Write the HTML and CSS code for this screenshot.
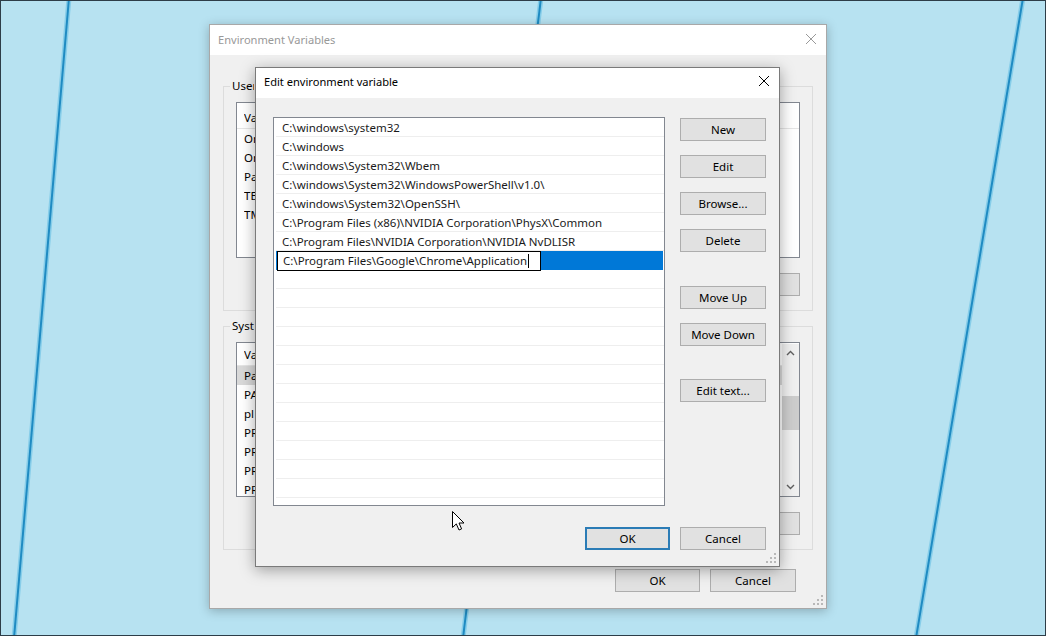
FILE: index.html
```html
<!DOCTYPE html>
<html>
<head>
<meta charset="utf-8">
<link rel="stylesheet" href="styles.css">
</head>
<body>
<div class="desk">
  <svg class="backdrop" width="1046" height="636" viewBox="0 0 1046 636">
    <g class="halo">
      <line x1="69" y1="-2" x2="14" y2="638"/>
      <line x1="541" y1="-2" x2="463" y2="638"/>
      <line x1="1023" y1="-2" x2="916" y2="638"/>
    </g>
    <g class="core">
      <line x1="69" y1="-2" x2="14" y2="638"/>
      <line x1="541" y1="-2" x2="463" y2="638"/>
      <line x1="1023" y1="-2" x2="916" y2="638"/>
    </g>
  </svg>

  <div class="win win-env">
    <div class="titlebar inactive">
      <span class="title">Environment Variables</span>
      <svg class="close" width="12" height="12" viewBox="0 0 12 12"><path d="M1 1L11 11M11 1L1 11"/></svg>
    </div>
    <div class="env-body">
      <fieldset class="group">
        <legend><span class="clip">User</span></legend>
        <div class="vlist vlist-user">
          <div class="vhead"><span class="c1">Va</span></div>
          <div class="vrow"><span class="c1">On</span></div>
          <div class="vrow"><span class="c1">On</span></div>
          <div class="vrow"><span class="c1">Pa</span></div>
          <div class="vrow"><span class="c1">TE</span></div>
          <div class="vrow"><span class="c1">TM</span></div>
        </div>
        <div class="grp-btns">
          <div class="btn"></div>
          <div class="btn"></div>
          <div class="btn"></div>
        </div>
      </fieldset>
      <fieldset class="group group-sys">
        <legend><span class="clip">Syste</span></legend>
        <div class="vlist vlist-sys">
          <div class="vcontent">
            <div class="vhead"><span class="c1">Va</span></div>
            <div class="vrow sel"><span class="c1">Pa</span></div>
            <div class="vrow"><span class="c1">PA</span></div>
            <div class="vrow"><span class="c1">pl</span></div>
            <div class="vrow"><span class="c1">PR</span></div>
            <div class="vrow"><span class="c1">PR</span></div>
            <div class="vrow"><span class="c1">PR</span></div>
            <div class="vrow"><span class="c1">PR</span></div>
          </div>
          <div class="vscroll">
            <svg class="arrow" width="9" height="6" viewBox="0 0 9 6"><path d="M1 5L4.5 1.5L8 5"/></svg>
            <div class="track"><div class="thumb"></div></div>
            <svg class="arrow" width="9" height="6" viewBox="0 0 9 6"><path d="M1 1L4.5 4.5L8 1"/></svg>
          </div>
        </div>
        <div class="grp-btns">
          <div class="btn"></div>
          <div class="btn"></div>
          <div class="btn"></div>
        </div>
      </fieldset>
      <div class="footer env-footer">
        <div class="btn ok">OK</div>
        <div class="btn">Cancel</div>
      </div>
    </div>
    <svg class="grip" width="10" height="10" viewBox="0 0 10 10"><path d="M8 0h2v2h-2zM8 4h2v2h-2zM4 4h2v2h-2zM8 8h2v2h-2zM4 8h2v2h-2zM0 8h2v2h-2z"/></svg>
  </div>

  <div class="win win-edit">
    <div class="titlebar">
      <span class="title">Edit environment variable</span>
      <svg class="close" width="12" height="12" viewBox="0 0 12 12"><path d="M1 1L11 11M11 1L1 11"/></svg>
    </div>
    <div class="edit-body">
      <div class="plist">
        <div class="prow">C:\windows\system32</div>
        <div class="prow">C:\windows</div>
        <div class="prow">C:\windows\System32\Wbem</div>
        <div class="prow">C:\windows\System32\WindowsPowerShell\v1.0\</div>
        <div class="prow">C:\windows\System32\OpenSSH\</div>
        <div class="prow">C:\Program Files (x86)\NVIDIA Corporation\PhysX\Common</div>
        <div class="prow">C:\Program Files\NVIDIA Corporation\NVIDIA NvDLISR</div>
        <div class="prow editing"><div class="editbox">C:\Program Files\Google\Chrome\Application<span class="caret"></span></div></div>
        <div class="prow"></div>
        <div class="prow"></div>
        <div class="prow"></div>
        <div class="prow"></div>
        <div class="prow"></div>
        <div class="prow"></div>
        <div class="prow"></div>
        <div class="prow"></div>
        <div class="prow"></div>
        <div class="prow"></div>
        <div class="prow"></div>
        <div class="prow"></div>
        <div class="prow"></div>
      </div>
      <div class="side-btns">
        <div class="btn">New</div>
        <div class="btn">Edit</div>
        <div class="btn">Browse...</div>
        <div class="btn">Delete</div>
        <div class="btn gap-big">Move Up</div>
        <div class="btn">Move Down</div>
        <div class="btn gap-big2">Edit text...</div>
      </div>
      <div class="footer edit-footer">
        <div class="btn default">OK</div>
        <div class="btn">Cancel</div>
      </div>
    </div>
    <svg class="grip" width="10" height="10" viewBox="0 0 10 10"><path d="M8 0h2v2h-2zM8 4h2v2h-2zM4 4h2v2h-2zM8 8h2v2h-2zM4 8h2v2h-2zM0 8h2v2h-2z"/></svg>
  </div>

  <svg class="cursor" width="13" height="20" viewBox="0 0 13 20"><path d="M0.5 0.5L0.5 16.5L4.3 12.9L7 19L9.6 17.9L7 12L12 12Z"/></svg>
</div>
</body>
</html>
```

FILE: styles.css
```css
* { box-sizing: border-box; }
html, body { margin: 0; padding: 0; }
body {
  width: 1046px;
  height: 636px;
  overflow: hidden;
  font-family: "Noto Sans", "Open Sans", sans-serif;
  font-size: 11.5px;
  color: #000;
}
.desk {
  position: relative;
  width: 1046px;
  height: 636px;
  background: #b7e2f1;
  border: 1px solid #2d3d48;
  overflow: hidden;
}
.backdrop { position: absolute; left: -1px; top: -1px; }
.backdrop .halo line { stroke: #86cde9; stroke-width: 5; }
.backdrop .core line { stroke: #1f8bc2; stroke-width: 2; }

.win {
  position: absolute;
  background: #f0f0f0;
  display: flex;
  flex-direction: column;
}
.win-env {
  left: 208px; top: 23px;
  width: 618px; height: 585px;
  border: 1px solid #a8a8a8;
  box-shadow: 0 2px 10px rgba(0,0,0,0.25);
}
.win-edit {
  left: 254px; top: 66px;
  width: 525px; height: 500px;
  border: 1px solid #7a7a7a;
  box-shadow: 0 3px 14px rgba(0,0,0,0.35);
}
.titlebar {
  height: 30px;
  flex: none;
  background: #fff;
  display: flex;
  align-items: center;
  justify-content: space-between;
  padding: 0 8px 2px 8px;
}
.titlebar .title { font-size: 11.1px; color: #000; }
.win-edit .titlebar { padding-bottom: 4px; }
.titlebar .close { stroke: #000; stroke-width: 1; fill: none; margin-right: 1px; }
.titlebar.inactive .title { color: #999; }
.titlebar.inactive .close { stroke: #999; }

.btn {
  width: 86px;
  height: 23px;
  background: #e1e1e1;
  border: 1px solid #adadad;
  display: flex;
  align-items: center;
  justify-content: center;
  color: #000;
}
.btn.default { border: 2px solid #2b7cb6; }

/* Environment variables window */
.env-body {
  flex: 1;
  display: flex;
  flex-direction: column;
  padding: 23px 13px 0 13px;
}
.group {
  margin: 0;
  padding: 8px 12px 14px 12px;
  border: 1px solid #dcdcdc;
  min-width: 0;
}
.group legend {
  padding: 0 2px;
  margin-left: -6px;
  line-height: 16px;
  color: #000;
}
.group legend .clip { display: inline-block; width: 22px; overflow: hidden; vertical-align: top; white-space: nowrap; }
.group-sys { margin-top: 7px; }
.vlist {
  background: #fff;
  border: 1px solid #828790;
  height: 156px;
  overflow: hidden;
}
.vlist-sys { display: flex; height: 155px; padding-top: 1px; }
.vcontent { flex: 1; }
.vhead, .vrow { display: flex; height: 19px; align-items: center; padding-left: 7px; white-space: nowrap; }
.vhead { height: 22px; border-bottom: 1px solid #e5e5e5; }
.vlist-user .vhead { margin-top: 3px; height: 23px; }
.vrow.sel { background: #d9d9d9; }
.vhead .c1, .vrow .c1 { width: 12px; overflow: hidden; }
.vscroll {
  width: 17px;
  background: #f0f0f0;
  display: flex;
  flex-direction: column;
  align-items: center;
}
.vscroll .arrow { fill: none; stroke: #606060; stroke-width: 1.4; margin: 6px 0; }
.vscroll .track { flex: 1; width: 100%; padding: 34px 0 0 0; }
.vscroll .thumb { width: 100%; height: 34px; background: #cdcdcd; }
.grp-btns {
  display: flex;
  justify-content: flex-end;
  gap: 10px;
  margin-top: 15px;
}
.grp-btns .btn { width: 75px; height: 23px; }
.env-footer {
  display: flex;
  justify-content: flex-end;
  gap: 10px;
  margin-top: 19px;
  padding-right: 17px;
}
.env-footer .btn { width: 86px; }
.env-footer .btn.ok { width: 85px; }

/* Edit dialog */
.edit-body {
  flex: 1;
  display: grid;
  grid-template-columns: 391px 86px;
  grid-template-rows: 389px auto;
  column-gap: 16px;
  padding: 19px 12px 0 18px;
}
.plist {
  background: #fff;
  border: 1px solid #828790;
  overflow: hidden;
  padding: 0 0 0 2px;
  margin-left: -1px;
}
.prow {
  height: 19px;
  border-bottom: 1px solid #eeeeee;
  padding-left: 6px;
  display: flex;
  align-items: center;
  white-space: nowrap;
  color: #1a1a1a;
}
.prow.editing {
  background: #0078d7;
  padding-left: 0;
  border-bottom: none;
  margin-right: 1px;
}
.editbox {
  width: 264px;
  height: 20px;
  margin-left: 1px;
  background: #fff;
  border: 1px solid #000;
  padding-left: 5px;
  display: flex;
  align-items: center;
}
.caret {
  display: inline-block;
  width: 1px;
  height: 14px;
  background: #000;
  margin-left: 1px;
}
.side-btns {
  display: flex;
  flex-direction: column;
  gap: 14px;
  padding-top: 1px;
  margin-left: -1px;
}
.side-btns .gap-big { margin-top: 20px; }
.side-btns .gap-big2 { margin-top: 19px; }
.edit-footer {
  grid-column: 1 / 3;
  display: flex;
  justify-content: flex-end;
  gap: 10px;
  margin-top: 21px;
  margin-right: 1px;
}
.edit-footer .btn { width: 86px; }
.edit-footer .btn.default { width: 85px; }

.grip {
  position: absolute;
  right: 3px;
  bottom: 3px;
  fill: #b8b8b8;
}
.cursor {
  position: absolute;
  left: 451px;
  top: 510px;
  fill: #fff;
  stroke: #000;
  stroke-width: 1;
}
```
